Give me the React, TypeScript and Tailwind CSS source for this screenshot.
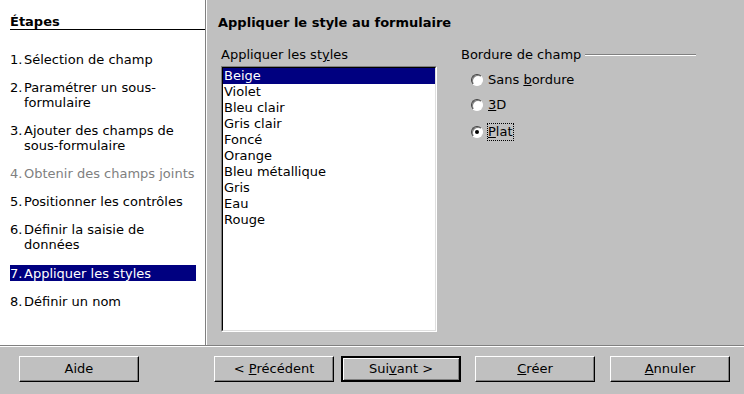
import React from "react";

type Step = {
  num: string;
  lines: string[];
  disabled?: boolean;
  active?: boolean;
};

const steps: Step[] = [
  { num: "1.", lines: ["Sélection de champ"] },
  { num: "2.", lines: ["Paramétrer un sous-", "formulaire"] },
  { num: "3.", lines: ["Ajouter des champs de", "sous-formulaire"] },
  { num: "4.", lines: ["Obtenir des champs joints"], disabled: true },
  { num: "5.", lines: ["Positionner les contrôles"] },
  { num: "6.", lines: ["Définir la saisie de", "données"] },
  { num: "7.", lines: ["Appliquer les styles"], active: true },
  { num: "8.", lines: ["Définir un nom"] },
];

const styles = [
  "Beige",
  "Violet",
  "Bleu clair",
  "Gris clair",
  "Foncé",
  "Orange",
  "Bleu métallique",
  "Gris",
  "Eau",
  "Rouge",
];

const Radio = ({ checked }: { checked?: boolean }) => (
  <span className="relative w-[12px] h-[12px] rounded-full bg-white border border-t-[#404040] border-l-[#404040] border-r-white border-b-white shadow-[inset_1px_1px_0_#808080] flex items-center justify-center">
    {checked && <span className="w-[4px] h-[4px] rounded-full bg-black" />}
  </span>
);

const Button = ({
  children,
  primary,
  className,
}: {
  children: React.ReactNode;
  primary?: boolean;
  className?: string;
}) => (
  <div
    className={
      "h-[26px] w-[120px] flex items-center justify-center bg-[#c0c0c0] " +
      (primary
        ? "border-2 border-black shadow-[inset_1px_1px_0_#fff,inset_-1px_-1px_0_#808080]"
        : "border border-t-white border-l-white border-r-black border-b-black shadow-[inset_-1px_-1px_0_#808080]") +
      " " +
      (className ?? "")
    }
  >
    {children}
  </div>
);

export default function App() {
  return (
    <div className="w-[744px] h-[394px] bg-[#c0c0c0] flex flex-col font-['DejaVu_Sans',sans-serif] text-[13px] text-black overflow-hidden">
      <div className="flex h-[345px]">
        {/* steps panel */}
        <div className="w-[206px] bg-white border-r border-[#808080] shadow-[1px_0_0_#fff] flex flex-col">
          <div className="ml-[10px] pt-[14px] border-b border-black font-bold leading-[15px]">
            Étapes
          </div>
          <div className="flex flex-col gap-[13px] pt-[22px] pl-[10px] pr-[9px] leading-[15px]">
            {steps.map((s) => (
              <div
                key={s.num}
                className={
                  "flex " +
                  (s.active ? "bg-[#000080] text-white h-[16px] items-center " : "") +
                  (s.disabled ? "text-[#808080]" : "")
                }
              >
                <span className="w-[14px] shrink-0">{s.num}</span>
                <div className="flex flex-col">
                  {s.lines.map((l) => (
                    <span key={l}>{l}</span>
                  ))}
                </div>
              </div>
            ))}
          </div>
        </div>

        {/* content */}
        <div className="flex-1 flex flex-col pl-[12px] pt-[15px]">
          <div className="font-bold leading-[16px]">Appliquer le style au formulaire</div>
          <div className="flex mt-[16px] pl-[3px]">
            <div className="w-[216px] flex flex-col">
              <div className="leading-[16px] mb-[3px]">
                Appliquer les st<span className="underline">y</span>les
              </div>
              <div className="h-[266px] bg-white border border-t-[#808080] border-l-[#808080] border-r-white border-b-white">
                <div className="h-full border border-t-black border-l-black border-r-[#dfdfdf] border-b-[#dfdfdf] flex flex-col leading-[16px]">
                  {styles.map((s, i) => (
                    <div
                      key={s}
                      className={"pl-[1px] " + (i === 0 ? "bg-[#000080] text-white" : "")}
                    >
                      {s}
                    </div>
                  ))}
                </div>
              </div>
            </div>
            <div className="ml-[24px] flex flex-col w-[235px]">
              <div className="flex items-center leading-[16px]">
                <span>Bordure de champ</span>
                <span className="ml-[4px] flex-1 border-t border-[#808080] border-b border-b-white" />
              </div>
              <div className="flex flex-col pl-[10px] mt-[9px] gap-[9px] leading-[16px]">
                <div className="flex items-center gap-[5px]">
                  <Radio />
                  <span>
                    Sans <span className="underline">b</span>ordure
                  </span>
                </div>
                <div className="flex items-center gap-[5px]">
                  <Radio />
                  <span>
                    <span className="underline">3</span>D
                  </span>
                </div>
                <div className="flex items-center gap-[5px] mt-[2px]">
                  <Radio checked />
                  <span className="outline outline-1 outline-dotted outline-black">
                    <span className="underline">P</span>lat
                  </span>
                </div>
              </div>
            </div>
          </div>
        </div>
      </div>

      {/* separator */}
      <div className="border-t border-[#808080] border-b border-b-white" />

      {/* buttons */}
      <div className="flex items-start pt-[9px] pl-[19px]">
        <Button>Aide</Button>
        <Button className="ml-[75px]">
          &lt; <span className="underline ml-[4px]">P</span>récédent
        </Button>
        <Button primary className="ml-[7px]">
          Sui<span className="underline">v</span>ant &gt;
        </Button>
        <Button className="ml-[14px]">
          <span className="underline">C</span>réer
        </Button>
        <Button className="ml-[15px]">
          <span className="underline">A</span>nnuler
        </Button>
      </div>
    </div>
  );
}
